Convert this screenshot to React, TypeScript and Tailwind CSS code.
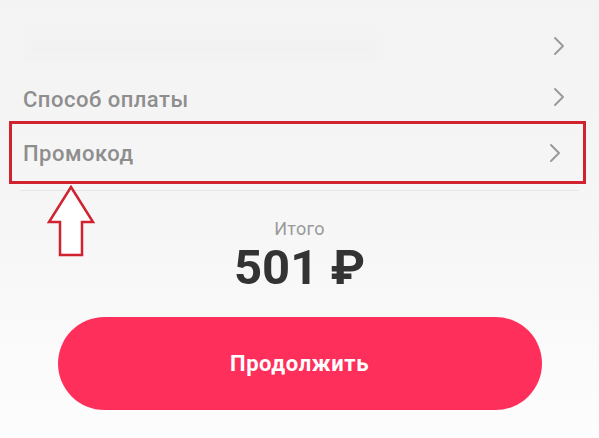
import React from "react";

function Chevron() {
  return (
    <svg width="14" height="20" viewBox="0 0 14 20" fill="none" className="shrink-0">
      <path d="M3 2 L11 10 L3 18" stroke="#9a9a9a" strokeWidth="2" strokeLinecap="round" strokeLinejoin="round" />
    </svg>
  );
}

export default function App() {
  return (
    <div
      className="relative w-[599px] h-[438px] overflow-hidden bg-gradient-to-b from-[#f3f3f3] via-[#f6f6f6] to-[#fdfdfd]"
      style={{ fontFamily: "Roboto, 'Noto Sans', Arial, sans-serif" }}
    >
      {/* blurred top row */}
      <div className="h-[73px] pt-[19px] flex items-center pl-[23px] pr-[33px]">
        <div className="flex-1 flex items-center gap-3">
          <div className="h-[30px] w-[360px] rounded bg-[#f0f0f0] opacity-40 blur-[4px]" />
        </div>
        <Chevron />
      </div>
      {/* Способ оплаты */}
      <div className="h-[48px] flex items-center justify-between pl-[23px] pr-[33px]">
        <span className="pt-[4px] text-[22px] font-medium text-[#8e8e8e] tracking-[0.5px]">Способ оплаты</span>
        <Chevron />
      </div>
      {/* Промокод highlighted */}
      <div className="ml-[9px] w-[577px] h-[63px] border-[3px] border-[#d0232f] flex items-center justify-between pl-[11px] pr-[21px]">
        <span className="pt-[1px] text-[22px] font-medium text-[#8e8e8e] tracking-[0.5px]">Промокод</span>
        <Chevron />
      </div>
      <div className="mx-[20px] mt-[6px] h-px bg-[#e6e6e6]" />

      {/* arrow annotation */}
      <svg className="absolute left-[46px] top-[185px]" width="50" height="72" viewBox="0 0 50 72" fill="none">
        <path
          d="M25 2 L47 37 L36 37 L36 70 L14 70 L14 37 L3 37 Z"
          fill="#ffffff"
          stroke="#d0232f"
          strokeWidth="2.5"
          strokeLinejoin="miter"
        />
      </svg>

      <div className="flex flex-col items-center mt-[28px]">
        <span className="text-[18px] leading-[20px] text-[#9a9a9a] tracking-[0.3px]">Итого</span>
        <span className="text-[49px] leading-[54px] font-bold text-[#333333] mt-[2px]">501 ₽</span>
      </div>

      <div className="flex justify-center mt-[22px]">
        <button className="w-[484px] h-[93px] rounded-full bg-[#fe2f5b] flex items-center justify-center">
          <span className="text-white text-[22px] font-bold tracking-[0.6px]">Продолжить</span>
        </button>
      </div>
    </div>
  );
}
